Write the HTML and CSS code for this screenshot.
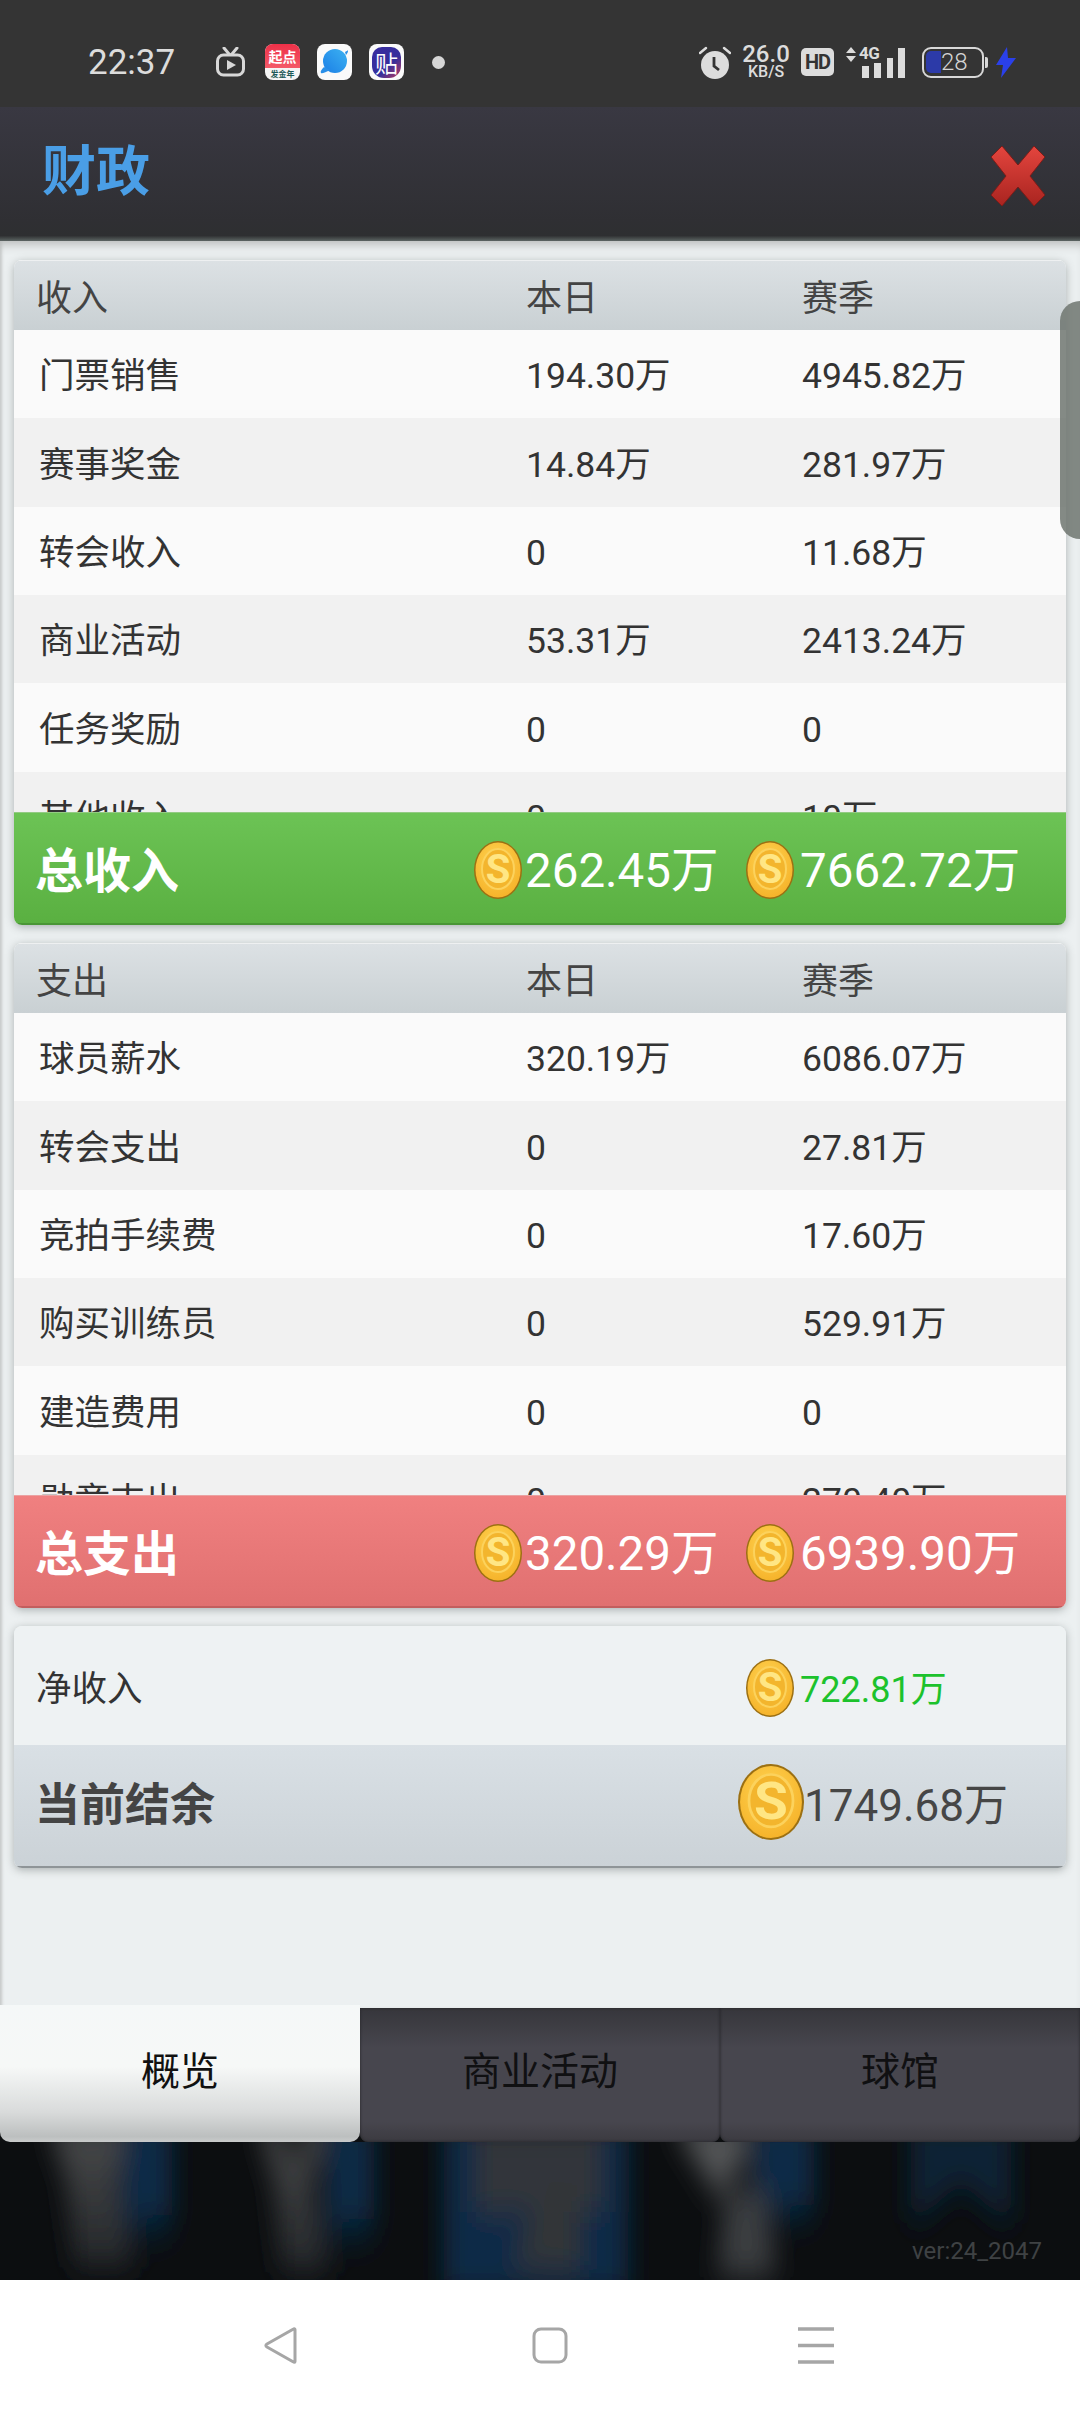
FILE: index.html
```html
<!DOCTYPE html>
<html lang="zh">
<head>
<meta charset="utf-8">
<title>财政</title>
<link rel="stylesheet" href="styles.css">
</head>
<body>
<svg class="defs" width="0" height="0" aria-hidden="true">
  <defs>
    <radialGradient id="coinFace" cx="45%" cy="35%" r="70%">
      <stop offset="0" stop-color="#ffd452"/>
      <stop offset="1" stop-color="#f5b128"/>
    </radialGradient>
    <symbol id="coin" viewBox="0 0 48 58" preserveAspectRatio="none">
      <ellipse cx="24" cy="29" rx="24" ry="29" fill="#9c7012"/>
      <ellipse cx="24" cy="29" rx="22.500" ry="27.500" fill="url(#coinFace)"/>
      <ellipse cx="24" cy="28" rx="16" ry="20" fill="#f3b52d" stroke="#fcd25c" stroke-width="2"/>
      <text x="24" y="42" text-anchor="middle" class="coin-s">S</text>
    </symbol>
  </defs>
</svg>
<div class="screen">
  <header class="status">
    <span class="time">22:37</span>
    <svg class="ic-tv" viewBox="0 0 29 30" width="29" height="30"><path d="M8 1l5 6M21 1l-5 6" stroke="#d8d8d8" stroke-width="3" fill="none" stroke-linecap="round"/><rect x="1.500" y="8" width="26" height="20" rx="6" fill="none" stroke="#d8d8d8" stroke-width="3"/><path d="M11 13l9 5-9 5z" fill="#d8d8d8"/></svg>
    <span class="app app-qd"><span class="qd-top">起点</span><span class="qd-bot">发金年</span></span>
    <span class="app app-blue"><svg viewBox="0 0 35 35" width="35" height="35"><defs><linearGradient id="pl" x1="1" y1="0" x2="0" y2="1"><stop offset="0" stop-color="#3cb2f2"/><stop offset="1" stop-color="#1b7fe6"/></linearGradient></defs><circle cx="18" cy="17" r="12" fill="url(#pl)"/><path d="M7 23c-3 3-4 5-3 6s5-1 9-3z" fill="#2a8fe8"/><path d="M28 8c2-1 3-2 3-1s-1 3-2 4z" fill="#2a8fe8"/></svg></span>
    <span class="app app-tie"><span class="tie-in">贴</span></span>
    <span class="dot"></span>
    <span class="status-right">
      <svg class="ic-alarm" viewBox="0 0 32 33" width="32" height="33"><path d="M1 7l6-5M31 7l-6-5" stroke="#dcdcdc" stroke-width="2.400" stroke-linecap="round"/><circle cx="16" cy="19" r="14" fill="#dcdcdc"/><path d="M15 11v9l5 4" stroke="#333" stroke-width="2.800" fill="none"/></svg>
      <span class="speed"><b>26.0</b><i>KB/S</i></span>
      <span class="hd">HD</span>
      <svg class="ic-arrows" viewBox="0 0 10 15" width="10" height="15"><path d="M5 0l5 6H0zM5 15l5-6H0z" fill="#dcdcdc"/></svg>
      <span class="signal">
        <span class="net">4G</span>
        <svg class="ic-bars" viewBox="0 0 43 30" width="43" height="30"><path d="M0 18h7v12H0zM12 15h7v15h-7zM25 10h6v20h-6zM36 0h7v30h-7z" fill="#dcdcdc"/></svg>
      </span>
      <span class="battery"><span class="batt-fill"></span><span class="batt-num">28</span></span>
      <span class="batt-tip"></span>
      <svg class="ic-bolt" viewBox="0 0 20 31" width="20" height="31"><path d="M11 0L0 18h7l-2 13L20 11h-8z" fill="#2a40ea"/></svg>
    </span>
  </header>

  <div class="titlebar">
    <h1 class="title">财政</h1>
    <svg class="close" viewBox="0 0 54 62" width="54" height="62"><defs><linearGradient id="xg" x1="0" y1="0" x2="0" y2="1"><stop offset="0" stop-color="#e4453e"/><stop offset="1" stop-color="#a92420"/></linearGradient></defs><path d="M11 1l16 19L43 1l11 11-15 19 15 19-11 11-16-19-16 19L0 50l15-19L0 12z" fill="url(#xg)" stroke="#7c1c18" stroke-width="1"/></svg>
  </div>

  <main class="panel">
    <span class="scroll-thumb"></span>
    <section class="card">
      <div class="thead"><span>收入</span><span>本日</span><span>赛季</span></div>
      <div class="tbody">
        <div class="row"><span>门票销售</span><span>194.30万</span><span>4945.82万</span></div>
        <div class="row"><span>赛事奖金</span><span>14.84万</span><span>281.97万</span></div>
        <div class="row"><span>转会收入</span><span>0</span><span>11.68万</span></div>
        <div class="row"><span>商业活动</span><span>53.31万</span><span>2413.24万</span></div>
        <div class="row"><span>任务奖励</span><span>0</span><span>0</span></div>
        <div class="row"><span>其他收入</span><span>0</span><span>10万</span></div>
      </div>
      <div class="total total-in">
        <span class="total-label">总收入</span>
        <span class="money"><svg class="coin"><use href="#coin"/></svg>262.45万</span>
        <span class="money money-wide"><svg class="coin"><use href="#coin"/></svg>7662.72万</span>
      </div>
    </section>

    <section class="card">
      <div class="thead"><span>支出</span><span>本日</span><span>赛季</span></div>
      <div class="tbody">
        <div class="row"><span>球员薪水</span><span>320.19万</span><span>6086.07万</span></div>
        <div class="row"><span>转会支出</span><span>0</span><span>27.81万</span></div>
        <div class="row"><span>竞拍手续费</span><span>0</span><span>17.60万</span></div>
        <div class="row"><span>购买训练员</span><span>0</span><span>529.91万</span></div>
        <div class="row"><span>建造费用</span><span>0</span><span>0</span></div>
        <div class="row"><span>勋章支出</span><span>0</span><span>270.40万</span></div>
      </div>
      <div class="total total-out">
        <span class="total-label">总支出</span>
        <span class="money"><svg class="coin"><use href="#coin"/></svg>320.29万</span>
        <span class="money money-wide"><svg class="coin"><use href="#coin"/></svg>6939.90万</span>
      </div>
    </section>

    <section class="card summary">
      <div class="net-row"><span class="net-label">净收入</span><span class="money money-wide net-val"><svg class="coin"><use href="#coin"/></svg>722.81万</span></div>
      <div class="bal-row"><span class="bal-label">当前结余</span><span class="money bal-val"><svg class="coin coin-big"><use href="#coin"/></svg>1749.68万</span></div>
    </section>
  </main>

  <nav class="tabs">
    <span class="tab tab-on">概览</span>
    <span class="tab">商业活动</span>
    <span class="tab">球馆</span>
  </nav>

  <div class="backdrop">
    <svg class="blur" viewBox="0 0 1080 138" preserveAspectRatio="none">
      <defs>
        <filter id="bl" x="-30%" y="-30%" width="160%" height="160%"><feGaussianBlur stdDeviation="12 16"/></filter>
        <linearGradient id="fadeBlue" x1="0" y1="0" x2="0" y2="1"><stop offset="0" stop-color="#082a46"/><stop offset=".7" stop-color="#082a46"/><stop offset="1" stop-color="#082a46" stop-opacity="0"/></linearGradient>
        <linearGradient id="fadeGrey" x1="0" y1="0" x2="0" y2="1"><stop offset="0" stop-color="#4a4b4c"/><stop offset="1" stop-color="#232629"/></linearGradient>
      </defs>
      <g filter="url(#bl)">
        <rect x="122" y="-20" width="50" height="125" fill="url(#fadeBlue)"/>
        <path d="M48-20h78l-8 65 18 80H74l-8-85z" fill="url(#fadeGrey)"/>
        <rect x="326" y="-20" width="48" height="130" fill="url(#fadeBlue)"/>
        <path d="M258-20h20l16 40 14-40h20l-16 65 20 85h-52l-6-85z" fill="url(#fadeGrey)"/>
        <rect x="444" y="-20" width="184" height="172" fill="#0a2a46"/>
        <rect x="476" y="-20" width="125" height="90" fill="#33363a"/>
        <path d="M510 125l40-85 30 0v90z" fill="#333638"/>
        <rect x="752" y="-20" width="62" height="110" fill="url(#fadeBlue)"/>
        <path d="M672-20h76v30l-30 45z" fill="#545658"/>
        <path d="M725 50l40-5 12 90h-60z" fill="#3a3d40"/>
        <path d="M911-20h100v105l-50-45-50 45z" fill="#0a2335"/>
      </g>
    </svg>
    <span class="ver">ver:24_2047</span>
  </div>

  <footer class="navbar">
    <svg viewBox="0 0 34 37" width="34" height="37"><path d="M31 2.500v32c0 1-1 1-2 .2L3 20c-1.500-1-1.500-2 0-3L29 2.300c1-.8 2-.8 2 .2z" fill="none" stroke="#a6a6a6" stroke-width="3"/></svg>
    <svg viewBox="0 0 36 37" width="36" height="37"><rect x="2" y="2" width="32" height="33" rx="7" fill="none" stroke="#a6a6a6" stroke-width="3"/></svg>
    <svg class="nav-menu" viewBox="0 0 36 37" width="36" height="37"><path d="M0 2h36M0 18.500h36M0 35h36" stroke="#a6a6a6" stroke-width="3.500"/></svg>
  </footer>
</div>
</body>
</html>
```
FILE: styles.css
```css
* { box-sizing: border-box; }
html, body { margin: 0; padding: 0; }
body {
  font-family: Roboto, "Noto Sans CJK SC", sans-serif;
  background: #000;
}
.defs { position: absolute; }
.coin-s { font: 700 40px Roboto, sans-serif; fill: #ffe684; }

.screen { width: 1080px; height: 2412px; display: flex; flex-direction: column; overflow: hidden; }

/* status bar */
.status {
  height: 107px; flex: none; background: #343434; color: #dcdcdc;
  display: flex; align-items: center; padding: 17px 0 0 88px;
}
.time { font-size: 35px; width: 128px; color: #dcdcdc; }
.ic-tv { margin-right: 20px; }
.app { width: 35px; height: 36px; border-radius: 8px; overflow: hidden; margin-right: 17px; flex: none; display: flex; flex-direction: column; background: #fafafa; }
.app-qd { background: #f5f5f5; }
.qd-top {
  height: 24px; background: linear-gradient(#ee3048, #f45a68); color: #fff;
  font: 700 14px/24px "Noto Sans CJK SC", sans-serif; text-align: center;
}
.qd-bot { font: 700 8px/12px "Noto Sans CJK SC", sans-serif; color: #1c5a58; text-align: center; white-space: nowrap; }
.app-tie { align-items: center; justify-content: center; }
.tie-in {
  width: 29px; height: 31px; border-radius: 10px 10px 12px 12px; background: linear-gradient(135deg, #3a2ca0, #352f9c 60%, #c0395a);
  color: #fff; font: 400 23px/30px "Noto Sans CJK SC", sans-serif; text-align: center;
}
.dot { width: 13px; height: 13px; border-radius: 50%; background: #d6d6d6; margin-left: 11px; }
.status-right { display: flex; align-items: center; margin-left: 254px; }
.speed { display: flex; flex-direction: column; align-items: center; width: 50px; margin-left: 10px; line-height: 1; }
.speed b { font-size: 24px; font-weight: 500; line-height: 20px; }
.speed i { font-style: normal; font-size: 16px; font-weight: 500; line-height: 16px; }
.hd {
  width: 33px; height: 28px; margin-left: 10px; background: #dcdcdc; color: #333; border-radius: 5px;
  font: 700 20px/28px Roboto, sans-serif; text-align: center; letter-spacing: -1px;
}
.ic-arrows { margin: -15px 0 0 12px; }
.signal { display: block; position: relative; width: 46px; height: 32px; margin-left: 3px; }
.net { position: absolute; left: 0; top: -1px; z-index: 1; font: 700 17px/17px Roboto, sans-serif; letter-spacing: -.5px; color: #dcdcdc; }
.ic-bars { display: block; position: absolute; left: 3px; top: 2px; }
.battery {
  width: 62px; height: 31px; margin-left: 17px; border: 2.500px solid #d8d8d8; border-radius: 9px;
  display: flex; align-items: center; padding-left: 2px;
}
.batt-fill { width: 15px; height: 22px; background: #2c3aa8; border-radius: 5px 0 0 5px; }
.batt-num { font-size: 24px; font-weight: 300; line-height: 24px; color: #d4d4d4; }
.batt-tip { width: 3px; height: 11px; background: #d8d8d8; border-radius: 0 2px 2px 0; margin-left: 1px; }
.ic-bolt { margin-left: 8px; }

/* title */
.titlebar {
  height: 134px; flex: none; display: flex; align-items: center; justify-content: space-between;
  padding: 0 35px 0 42px;
  background: linear-gradient(#393842, #2f2f33 85%, #2e2f31 96%, #5c6563);
}
.title { margin: 0 0 3px; font-size: 54px; line-height: 1; font-weight: 700; color: #4a9ee6; }
.close { margin-top: 4px; }

/* panel */
.panel {
  height: 1767px; flex: none; position: relative;
  padding: 19px 14px 0; background: #ecf0f1;
  box-shadow: inset 0 10px 10px -6px #bcbfbf, inset 3px 0 3px -1px #c8cbcb;
  display: flex; flex-direction: column; gap: 18px;
}
.scroll-thumb {
  position: absolute; right: 0; top: 60px; width: 20px; height: 238px; z-index: 2;
  background: rgba(110, 118, 112, .85); border-radius: 20px 0 0 20px;
}
.card { border-radius: 8px; overflow: hidden; box-shadow: 0 2px 8px rgba(90, 100, 100, .45); background: #fafafa; color: #333; }
.thead, .row { display: grid; align-items: center; line-height: 1; }
.thead span, .row span { padding-top: 6px; }
.thead {
  grid-template-columns: 490px 276px 1fr;
  height: 70px; padding-left: 22px; font-size: 36px; color: #444;
  background: linear-gradient(#dce1e4, #c9d0d3);
  border-top: 1px solid #eef0f1;
}
.tbody { height: 482px; overflow: hidden; }
.row {
  grid-template-columns: 487px 276px 1fr;
  height: 88.330px; padding-left: 25px; font-size: 35.500px; background: #fafafa;
}
.row:nth-child(even) { background: #f1f1f1; }

.total {
  height: 113px; display: grid; grid-template-columns: 460px 272px 1fr; align-items: center;
  color: #fff; border-top: 1px solid rgba(255,255,255,.35); line-height: 1;
}
.total-in { background: linear-gradient(#6cc355, #5ab041); border-bottom: 2px solid #4a9636; }
.total-out { background: linear-gradient(#f08080, #e07070); border-bottom: 2px solid #c25e5e; }
.total-label { padding: 8px 0 0 21px; font-size: 48px; font-weight: 700; }
.money { display: flex; align-items: center; font-size: 47.500px; gap: 3px; white-space: nowrap; line-height: 1; }
.total .money, .net-val { padding-top: 8px; }
.total .coin, .net-val .coin { margin-top: -4px; }
.money-wide { gap: 6px; }
.coin { width: 48px; height: 58px; flex: none; }
.coin-big { width: 66px; height: 76px; margin-bottom: 8px; }

.summary { background: #eef2f3; }
.net-row, .bal-row { display: grid; align-items: center; padding-left: 22px; line-height: 1; }
.net-row { height: 119px; grid-template-columns: 710px 1fr; background: #eef2f3; }
.bal-row {
  height: 123px; grid-template-columns: 702px 1fr;
  background: linear-gradient(#d9e0e5, #cbd2d7); border-bottom: 2px solid #8e9497;
}
.net-label { font-size: 35.500px; padding-top: 8px; }
.net-val { font-size: 36px; color: #1cc22c; }
.bal-label { font-size: 45px; font-weight: 700; color: #444; margin-left: -1px; }
.bal-val { font-size: 44px; gap: 0; color: #464646; }

/* tabs */
.tabs { height: 134px; flex: none; display: flex; position: relative; background: #0d0f11; }
.tab {
  flex: 1; display: flex; align-items: center; justify-content: center; line-height: 1;
  font-size: 39px; color: #101012; padding-bottom: 6px;
  background: linear-gradient(#36363b, #47464e 30%, #47464e 85%, #3b3a40);
  border-radius: 0 0 8px 8px; box-shadow: inset 0 0 3px #222226;
}
.tab-on {
  margin-top: -3px;
  background: linear-gradient(#f5f8f8, #f6f8f7 45%, #d9dbdb 78%, #bcbfbf 96%, #c9cbcb);
  box-shadow: none; color: #111; padding-bottom: 3px; border-radius: 0 0 10px 10px;
}

/* backdrop */
.backdrop { height: 138px; flex: none; position: relative; background: #0c0e10; overflow: hidden; }
.blur { display: block; width: 1080px; height: 138px; }
.ver { position: absolute; right: 38px; bottom: 15px; font-size: 24px; color: #3f4244; }

/* nav */
.navbar {
  flex: 1; background: #fff; display: flex; align-items: flex-start;
  gap: 234px; padding: 47px 0 0 264px;
}
.nav-menu { margin-left: -4px; }
```
